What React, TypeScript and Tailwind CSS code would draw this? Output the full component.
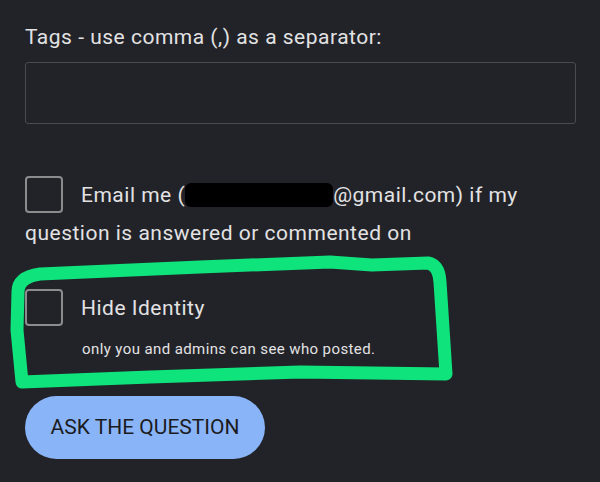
import React from "react";

function Box() {
  return (
    <span className="float-left mr-[18px] block h-[37px] w-[38px] rounded-[4px] border-2 border-[#8c8c8e]" />
  );
}

export default function App() {
  return (
    <div
      className="relative h-[482px] w-[600px] overflow-hidden bg-[#222328] pl-[25px] pr-[24px] text-[#e2e2e4]"
      style={{ fontFamily: "Roboto, 'Noto Sans', sans-serif" }}
    >
      <div className="pt-[23px] text-[21px] leading-[28px] tracking-[0.5px]">Tags - use comma (,) as a separator:</div>
      <div className="mt-[11px] h-[62px] rounded-[3px] border border-[#4a4b51]" />

      <div className="mt-[52px] text-[21px] leading-[38px] tracking-[0.5px]">
        <Box />
        Email me (
        <span className="inline-block h-[24px] w-[148px] translate-y-[5px] rounded-[6px] bg-black align-baseline" />
        @gmail.com) if my question is answered or commented on
      </div>

      <div className="mt-[37px]">
        <div className="text-[21px] leading-[38px] tracking-[0.5px]">
          <Box />
          Hide Identity
        </div>
        <div className="clear-both ml-[57px] mt-[12px] text-[15px] leading-[20px] tracking-[0.4px]">
          only you and admins can see who posted.
        </div>
      </div>

      <button className="mt-[37px] flex h-[63px] w-[240px] items-center justify-center rounded-full bg-[#8ab4f8] text-[21px] text-[#1b1c21]">
        ASK THE QUESTION
      </button>

      <svg className="pointer-events-none absolute left-0 top-0" width="600" height="482" viewBox="0 0 600 482">
        <path
          d="M18 292 Q18 277 40 274 L200 267 L330 262 L372 265 L428 263 Q439 265 440 282 L446 374 L300 372 L150 377 L22 382 L17 330 Z"
          fill="none"
          stroke="#0ee37c"
          strokeWidth="13"
          strokeLinejoin="round"
          strokeLinecap="round"
        />
      </svg>
    </div>
  );
}
